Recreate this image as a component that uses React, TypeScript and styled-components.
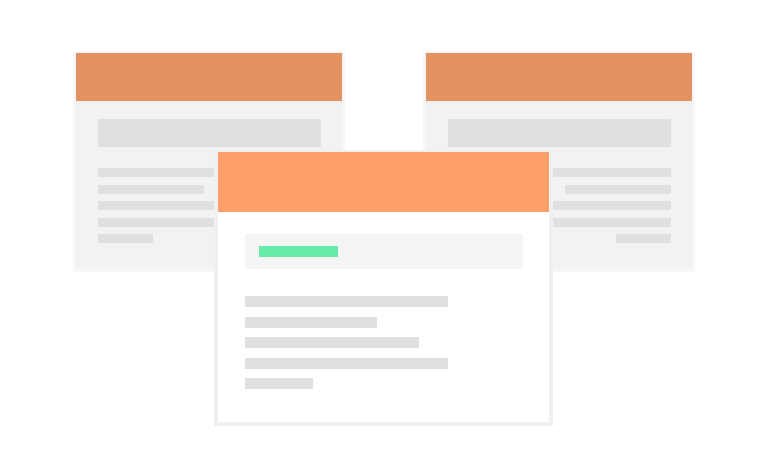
import React from 'react';
import styled, { createGlobalStyle } from 'styled-components';

const GlobalStyle = createGlobalStyle`
  html, body {
    margin: 0;
    padding: 0;
    background: #ffffff;
    font-family: "Liberation Sans", Arial, sans-serif;
  }
`;

const Canvas = styled.div`
  position: relative;
  width: 768px;
  height: 476px;
  overflow: hidden;
  background: #ffffff;
`;

const Card = styled.div<{ $x: number; $y: number; $w: number; $front?: boolean }>`
  position: absolute;
  left: ${p => p.$x}px;
  top: ${p => p.$y}px;
  width: ${p => p.$w}px;
  box-sizing: border-box;
  display: flex;
  flex-direction: column;
  background: ${p => (p.$front ? '#ffffff' : '#f2f2f2')};
  border: ${p => (p.$front ? '4px' : '3px')} solid ${p => (p.$front ? '#f0f0f0' : '#f7f7f7')};
  border-top-width: ${p => (p.$front ? '2px' : '1px')};
  z-index: ${p => (p.$front ? 2 : 1)};
`;

const Header = styled.div<{ $front?: boolean }>`
  height: ${p => (p.$front ? 60 : 48)}px;
  background: ${p => (p.$front ? '#ffa06b' : '#e49262')};
`;

const Body = styled.div<{ $front?: boolean }>`
  display: flex;
  flex-direction: column;
  padding: ${p => (p.$front ? '22px 26px 33px 27px' : '18px 21px 26px 22px')};
`;

const Block = styled.div<{ $front?: boolean }>`
  display: flex;
  align-items: center;
  height: ${p => (p.$front ? 35 : 28)}px;
  padding-left: 14px;
  background: ${p => (p.$front ? '#f5f5f5' : '#e0e0e0')};
  margin-bottom: ${p => (p.$front ? 27 : 21)}px;
`;

const Pill = styled.div`
  width: 79px;
  height: 11px;
  background: #67eba9;
`;

const Lines = styled.div<{ $front?: boolean; $right?: boolean }>`
  display: flex;
  flex-direction: column;
  align-items: ${p => (p.$right ? 'flex-end' : 'flex-start')};
  gap: ${p => (p.$front ? '9.5px' : '7.5px')};
`;

const Line = styled.div<{ $front?: boolean; $w: number }>`
  width: ${p => p.$w}%;
  height: ${p => (p.$front ? 11 : 9)}px;
  background: #e0e0e0;
`;

const widths = [73, 47.5, 62.6, 73, 24.5];

const BackCard: React.FC<{ x: number; right?: boolean }> = ({ x, right }) => (
  <Card $x={x} $y={52} $w={272}>
    <Header />
    <Body>
      <Block />
      <Lines $right={right}>
        {widths.map((w, i) => (
          <Line key={i} $w={right && (i === 0 || i === 2 || i === 3) ? 100 : w} />
        ))}
      </Lines>
    </Body>
  </Card>
);

export default function App() {
  return (
    <>
      <GlobalStyle />
      <Canvas>
        <BackCard x={73} />
        <BackCard x={423} right />
        <Card $x={214} $y={150} $w={339} $front>
          <Header $front />
          <Body $front>
            <Block $front>
              <Pill />
            </Block>
            <Lines $front>
              {widths.map((w, i) => (
                <Line key={i} $front $w={w} />
              ))}
            </Lines>
          </Body>
        </Card>
      </Canvas>
    </>
  );
}
